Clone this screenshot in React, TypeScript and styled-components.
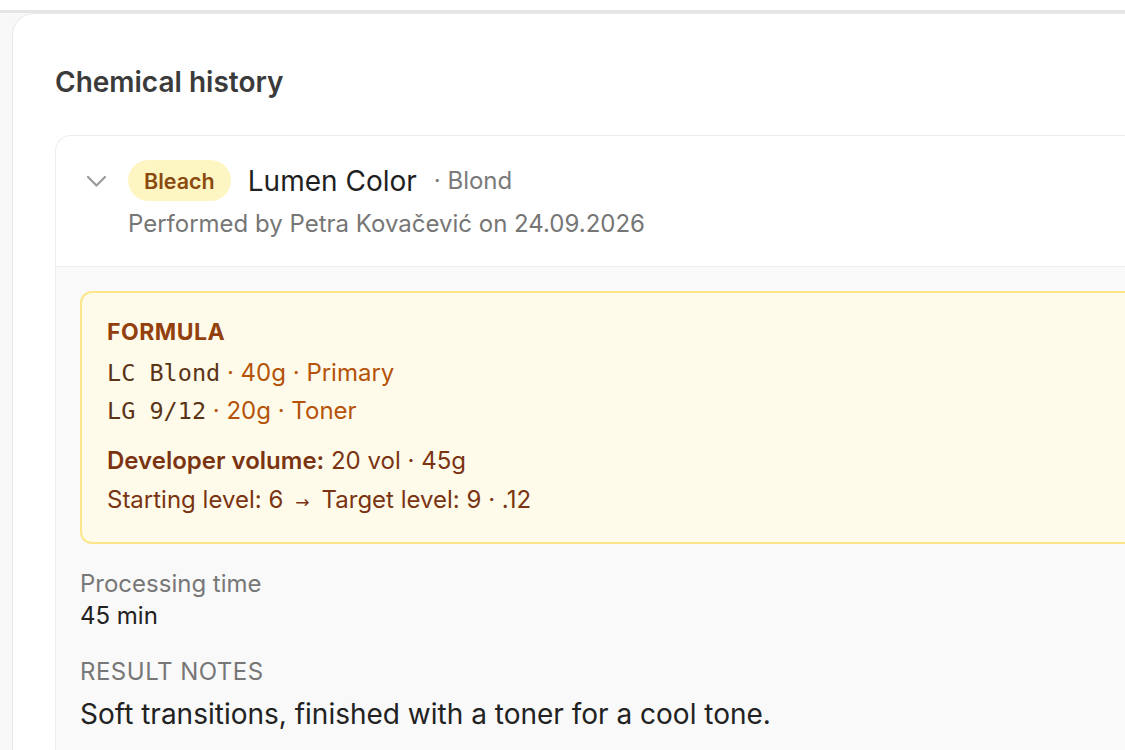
import React from "react";
import styled, { createGlobalStyle } from "styled-components";

const GlobalStyle = createGlobalStyle`
  html, body {
    margin: 0;
    padding: 0;
    background: #f8f8f8;
    font-family: Inter, "Noto Sans", sans-serif;
    overflow: hidden;
  }
`;

const TopBar = styled.div`
  height: 10px;
  background: #ffffff;
  border-bottom: 3px solid #e5e5e5;
`;

const Page = styled.div`
  padding-left: 12px;
  height: 737px;
  overflow: hidden;
`;

const Card = styled.section`
  width: 1200px;
  min-height: 100%;
  background: #ffffff;
  border: 1px solid #e9e9e9;
  border-right: none;
  border-bottom: none;
  border-top-left-radius: 22px;
  padding: 50px 0 0 42px;
  box-sizing: border-box;
`;

const Title = styled.h2`
  margin: 0 0 35px;
  font-size: 28px;
  line-height: 36px;
  font-weight: 600;
  color: #3b3b3b;
`;

const Entry = styled.div`
  border: 1px solid #ececec;
  border-right: none;
  border-top-left-radius: 16px;
  background: #ffffff;
  overflow: hidden;
`;

const EntryHeader = styled.div`
  display: flex;
  align-items: flex-start;
  gap: 21px;
  padding: 24px 0 26px 30px;
  border-bottom: 1px solid #ededed;
`;

const Chevron = styled.div`
  width: 21px;
  height: 41px;
  display: flex;
  align-items: center;
  justify-content: center;
  color: #9a9a9a;
`;

const HeaderText = styled.div`
  display: flex;
  flex-direction: column;
  gap: 7px;
`;

const TitleRow = styled.div`
  display: flex;
  align-items: center;
  gap: 17px;
`;

const Badge = styled.span`
  display: inline-flex;
  align-items: center;
  height: 41px;
  padding: 0 16px;
  border-radius: 21px;
  background: #fef6c2;
  color: #8a4a10;
  font-size: 21.5px;
  font-weight: 600;
`;

const Product = styled.span`
  font-size: 28px;
  color: #1f1f1f;
`;

const Shade = styled.span`
  font-size: 24px;
  color: #7a7a7a;
`;

const Meta = styled.div`
  font-size: 24px;
  line-height: 32px;
  color: #767676;
`;

const EntryBody = styled.div`
  background: #f9f9f9;
  padding: 24px 0 30px 24px;
`;

const FormulaBox = styled.div`
  border: 2px solid #fde68a;
  border-right: none;
  border-top-left-radius: 12px;
  border-bottom-left-radius: 12px;
  background: #fefbea;
  padding: 23px 0 24px 25px;
  margin-bottom: 24px;
`;

const FormulaLabel = styled.div`
  font-size: 23px;
  line-height: 32px;
  font-weight: 700;
  color: #92400e;
  letter-spacing: 0.5px;
  margin-bottom: 6px;
`;

const Ingredient = styled.div`
  font-size: 24px;
  line-height: 38px;
  color: #b45309;
`;

const Code = styled.span`
  font-family: "DejaVu Sans Mono", "Liberation Mono", monospace;
  font-size: 23.5px;
  color: #5a3416;
`;

const FormulaFacts = styled.div`
  margin-top: 15px;
  display: flex;
  flex-direction: column;
  gap: 7px;
`;

const Fact = styled.div`
  font-size: 24px;
  line-height: 32px;
  color: #7a3412;
`;

const Strong = styled.span`
  font-weight: 600;
`;

const Arrow = styled.span`
  font-family: "DejaVu Sans", sans-serif;
  font-size: 17px;
  padding: 0 12px 0 12px;
`;

const Field = styled.div`
  margin-bottom: 24px;
`;

const FieldLabel = styled.div<{ $caps?: boolean }>`
  font-size: 24px;
  line-height: 32px;
  color: #777777;
  text-transform: ${(p) => (p.$caps ? "uppercase" : "none")};
  letter-spacing: ${(p) => (p.$caps ? "0.5px" : "0")};
  margin-bottom: ${(p) => (p.$caps ? "6px" : "0")};
`;

const FieldValue = styled.div<{ $large?: boolean }>`
  font-size: ${(p) => (p.$large ? "28px" : "24px")};
  line-height: ${(p) => (p.$large ? "40px" : "32px")};
  color: #222222;
`;

const ChevronIcon = () => (
  <svg width="21" height="14" viewBox="0 0 21 14" fill="none" stroke="currentColor" strokeWidth="2.2" strokeLinecap="round" strokeLinejoin="round">
    <path d="M2 3l8.5 8.5L19 3" />
  </svg>
);

export default function App() {
  return (
    <>
      <GlobalStyle />
      <TopBar />
      <Page>
        <Card>
          <Title>Chemical history</Title>
          <Entry>
            <EntryHeader>
              <Chevron>
                <ChevronIcon />
              </Chevron>
              <HeaderText>
                <TitleRow>
                  <Badge>Bleach</Badge>
                  <Product>Lumen Color</Product>
                  <Shade>· Blond</Shade>
                </TitleRow>
                <Meta>Performed by Petra Kovačević on 24.09.2026</Meta>
              </HeaderText>
            </EntryHeader>
            <EntryBody>
              <FormulaBox>
                <FormulaLabel>FORMULA</FormulaLabel>
                <Ingredient>
                  <Code>LC Blond</Code> · 40g · Primary
                </Ingredient>
                <Ingredient>
                  <Code>LG 9/12</Code> · 20g · Toner
                </Ingredient>
                <FormulaFacts>
                  <Fact>
                    <Strong>Developer volume:</Strong> 20 vol · 45g
                  </Fact>
                  <Fact>
                    Starting level: 6<Arrow>→</Arrow>Target level: 9 · .12
                  </Fact>
                </FormulaFacts>
              </FormulaBox>
              <Field>
                <FieldLabel>Processing time</FieldLabel>
                <FieldValue>45 min</FieldValue>
              </Field>
              <Field>
                <FieldLabel $caps>Result notes</FieldLabel>
                <FieldValue $large>Soft transitions, finished with a toner for a cool tone.</FieldValue>
              </Field>
            </EntryBody>
          </Entry>
        </Card>
      </Page>
    </>
  );
}
